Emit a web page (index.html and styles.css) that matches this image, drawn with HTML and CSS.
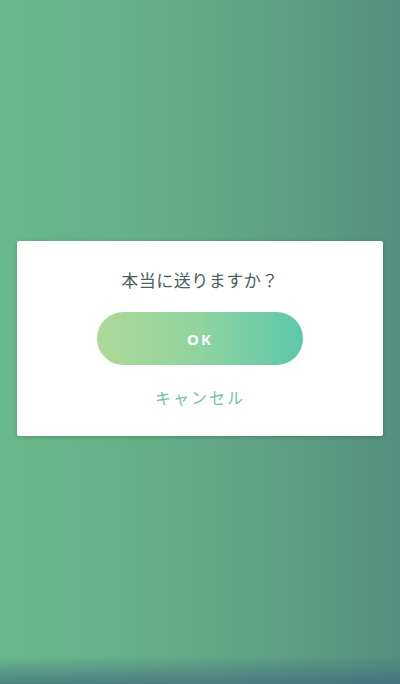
FILE: index.html
```html
<!DOCTYPE html>
<html>
<head>
    <title>確認</title>
    <link rel="stylesheet" href="styles.css">
</head>
<body>

<div id="overlay">
    <div id="dialog">
        <p class="message">本当に送りますか？</p>
        <button type="button" class="ok">OK</button>
        <a href="#" class="cancel">キャンセル</a>
    </div>
</div>

</body>
</html>
```

FILE: styles.css
```css
html, body {
    margin: 0;
    height: 100%;
}
body {
    font-family: "Noto Sans CJK JP", "Noto Sans", sans-serif;
    background: linear-gradient(to right, #6ab98b 0%, #64a987 50%, #54907f 100%);
    overflow: hidden;
}
#overlay {
    position: relative;
    height: 100%;
    display: flex;
    align-items: flex-start;
    justify-content: center;
    padding-top: 241px;
    box-sizing: border-box;
}
#overlay::after {
    content: "";
    position: absolute;
    left: 0;
    right: 0;
    bottom: 0;
    height: 28px;
    background: linear-gradient(to bottom, rgba(60, 100, 120, 0), rgba(60, 100, 125, 0.65));
}
#dialog {
    width: 366px;
    height: 195px;
    background-color: #fff;
    border-radius: 2px;
    box-shadow: 0 1px 4px rgba(0, 0, 0, 0.2);
    display: flex;
    flex-direction: column;
    align-items: center;
    box-sizing: border-box;
    padding-top: 25px;
}
.message {
    margin: 0;
    font-size: 17px;
    line-height: 28px;
    color: #4e5e5e;
    letter-spacing: 0.5px;
}
.ok {
    margin-top: 18px;
    width: 206px;
    height: 53px;
    border: none;
    border-radius: 27px;
    background: linear-gradient(to right, #aed997 0%, #8fd39f 50%, #5dc7ab 100%);
    color: #fff;
    font-family: "Open Sans", sans-serif;
    font-weight: bold;
    font-size: 15px;
    letter-spacing: 2px;
    cursor: pointer;
}
.cancel {
    margin-top: 20px;
    font-size: 16px;
    color: #6cc5a0;
    letter-spacing: 2px;
    text-decoration: none;
}
```
